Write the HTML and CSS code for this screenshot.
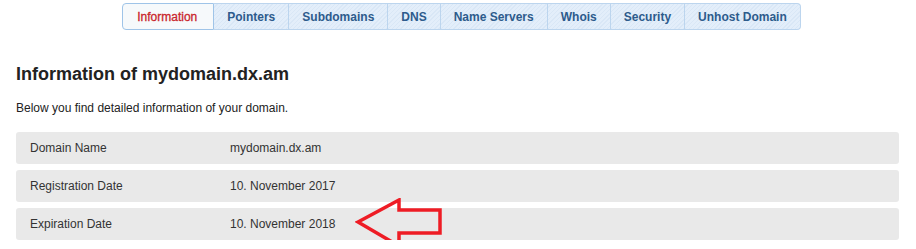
FILE: index.html
```html
<!DOCTYPE html>
<html lang="en">
<head>
    <meta charset="UTF-8">
    <title>Information of mydomain.dx.am</title>
    <link rel="stylesheet" href="styles.css">
</head>
<body>
    <!-- Domain tabs -->
    <div class="tabs">
        <a class="tab active" href="#">Information</a>
        <a class="tab" href="#">Pointers</a>
        <a class="tab" href="#">Subdomains</a>
        <a class="tab" href="#">DNS</a>
        <a class="tab" href="#">Name Servers</a>
        <a class="tab" href="#">Whois</a>
        <a class="tab" href="#">Security</a>
        <a class="tab" href="#">Unhost Domain</a>
    </div>

    <div class="content">
        <h2>Information of mydomain.dx.am</h2>
        <p>Below you find detailed information of your domain.</p>

        <div class="info-list">
            <div class="info-row">
                <span class="label">Domain Name</span>
                <span class="value">mydomain.dx.am</span>
            </div>
            <div class="info-row">
                <span class="label">Registration Date</span>
                <span class="value">10. November 2017</span>
            </div>
            <div class="info-row">
                <span class="label">Expiration Date</span>
                <span class="value">10. November 2018</span>
            </div>
        </div>
    </div>

    <!-- marker drawn over the screenshot -->
    <svg class="arrow" width="90" height="52" viewBox="0 0 90 52">
        <path d="M3 24 L44 2 L44 12 L85 12 L85 35 L44 35 L44 48 Z" fill="none" stroke="#ee1c25" stroke-width="3.5" stroke-linejoin="miter"/>
    </svg>
</body>
</html>
```

FILE: styles.css
```css
body {
    position: relative;
    margin: 0;
    font-family: "Liberation Sans", Arial, sans-serif;
    color: #333;
    background-color: #fff;
}

.tabs {
    display: flex;
    justify-content: center;
    padding-top: 3px;
    padding-left: 7px;
}

.tab {
    display: block;
    padding: 6px 13px 5px;
    font-size: 12px;
    line-height: 14px;
    font-weight: bold;
    color: #2d5b8c;
    text-decoration: none;
    border: 1px solid #bcd5ee;
    border-left: none;
    background-color: #e3eefa;
    background-image: repeating-linear-gradient(135deg, #e3eefa 0, #e3eefa 2px, #d9e7f6 2px, #d9e7f6 3px);
}

.tab:last-child {
    border-radius: 0 4px 4px 0;
}

.tab.active {
    color: #c9252c;
    font-weight: normal;
    background: #f6f9fb;
    border: 1px solid #9fc4e8;
    border-radius: 4px 0 0 4px;
    padding: 6px 16px 5px 14px;
    -webkit-text-stroke: 0.3px #c9252c;
}

.content {
    padding: 33px 17px 0 16px;
}

h2 {
    margin: 0;
    font-size: 18px;
    line-height: 22px;
    font-weight: bold;
    color: #222;
}

p {
    margin: 16px 0 16px;
    font-size: 12px;
    line-height: 15px;
    color: #222;
}

.info-list {
    display: flex;
    flex-direction: column;
    gap: 6px;
}

.info-row {
    display: flex;
    align-items: center;
    height: 32px;
    padding-left: 14px;
    background-color: #e9e9e9;
    border-radius: 3px;
    font-size: 12px;
}

.label {
    width: 200px;
}

.arrow {
    position: absolute;
    left: 355px;
    top: 198px;
}
```
